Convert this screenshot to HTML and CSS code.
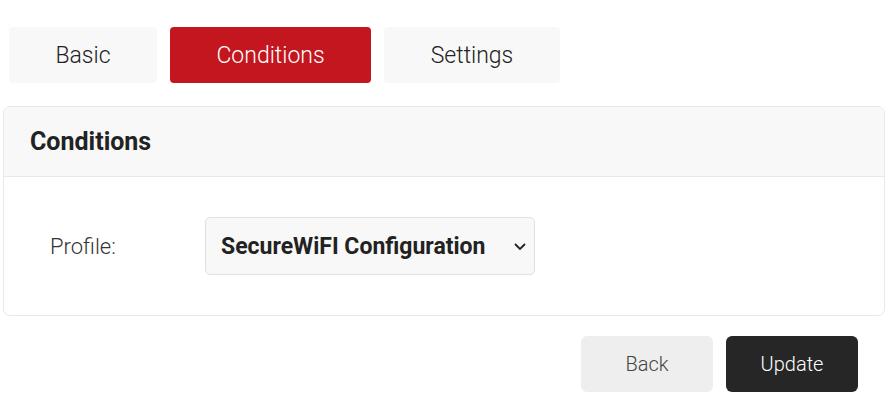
FILE: index.html
```html
<!DOCTYPE html>
<html>
<head>
<meta charset="utf-8">
<link rel="stylesheet" href="styles.css">
</head>
<body>
<div class="page">
  <nav class="tabs">
    <button class="tab tab-basic">Basic</button>
    <button class="tab tab-active tab-cond">Conditions</button>
    <button class="tab tab-settings">Settings</button>
  </nav>
  <section class="card">
    <header class="card-head">Conditions</header>
    <div class="card-body">
      <label class="field-label">Profile:</label>
      <div class="select">
        <span class="select-text">SecureWiFI Configuration</span>
        <svg class="chev" width="14" height="9" viewBox="0 0 14 9"><path d="M2 2 L7 7 L12 2" fill="none" stroke="#222" stroke-width="1.8"/></svg>
      </div>
    </div>
  </section>
  <div class="actions">
    <button class="btn btn-back">Back</button>
    <button class="btn btn-update">Update</button>
  </div>
</div>
</body>
</html>
```
FILE: styles.css
```css
* { box-sizing: border-box; }
html, body { margin: 0; padding: 0; background: #fff; }
body { font-family: Roboto, "Noto Sans", sans-serif; color: #222; }
.page { padding: 27px 2px 0 3px; }
.tabs { display: flex; gap: 13px; padding-left: 6px; }
.tab {
  height: 56px; border: none; border-radius: 4px; background: #f8f8f8;
  font-family: Roboto, sans-serif; font-weight: 300; font-size: 23px; color: #222;
  padding: 0; cursor: pointer;
}
.tab-basic { width: 148px; }
.tab-cond { width: 201px; }
.tab-settings { width: 176px; }
.tab-active { background: #c3161e; color: #fff; }
.card {
  margin-top: 23px; border: 1px solid #e8e8e8; border-radius: 7px; overflow: hidden;
}
.card-head {
  height: 70px; background: #f8f8f8; border-bottom: 1px solid #e8e8e8;
  display: flex; align-items: center; padding-left: 26px;
  font-weight: 700; font-size: 25px; color: #222;
}
.card-body {
  height: 138px; display: flex; align-items: center; padding-left: 46px;
}
.field-label { width: 155px; font-weight: 300; font-size: 22px; color: #333; }
.select {
  width: 330px; height: 58px; background: #f8f8f8; border: 1px solid #e0e0e0; border-radius: 5px;
  display: flex; align-items: center; justify-content: space-between; padding: 0 7px 0 15px;
}
.select-text { font-weight: 700; font-size: 23px; color: #222; }
.chev { display: block; }
.actions { display: flex; justify-content: flex-end; gap: 13px; margin-top: 20px; padding-right: 27px; }
.btn {
  width: 132px; height: 56px; border: none; border-radius: 6px;
  font-family: Roboto, sans-serif; font-weight: 300; font-size: 20px; padding: 0;
}
.btn-back { background: #eeeeee; color: #444; }
.btn-update { background: #262626; color: #fff; }
```
